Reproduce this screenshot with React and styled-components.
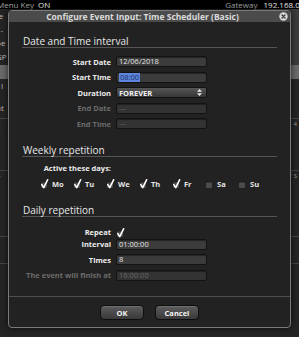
import styled, { createGlobalStyle } from "styled-components";

const GlobalStyle = createGlobalStyle`
  html, body {
    margin: 0;
    padding: 0;
    background: #242424;
  }
  body {
    font-family: "Open Sans", "Liberation Sans", sans-serif;
  }
`;

const Screen = styled.div`
  position: relative;
  width: 299px;
  height: 337px;
  overflow: hidden;
  background: #242424;
`;

const TopBar = styled.div`
  height: 9px;
  background: #000;
  display: flex;
  align-items: center;
  font-size: 8px;
  line-height: 9px;
  white-space: nowrap;
`;

const BarLabel = styled.span`
  color: ${(p) => (p.value ? "#f2f2f2" : "#a8a8a8")};
  margin-left: ${(p) => p.offset || 0}px;
`;

const BgRow = styled.div`
  display: flex;
  height: ${(p) => p.h}px;
  border-bottom: ${(p) => (p.line ? "1px solid #444" : "none")};
  box-sizing: border-box;
  background: ${(p) => (p.selected ? "#6a6a6a" : "transparent")};
`;

const BgLeft = styled.div`
  flex: 1;
  padding-left: 0;
  margin-left: -4px;
  font-size: 8px;
  color: #bcbcbc;
  line-height: 13px;
`;

const BgRight = styled.div`
  width: 40px;
  background: ${(p) => (p.gray ? "#3c3c3c" : "transparent")};
  font-size: 6px;
  color: #999;
  text-align: right;
  padding-right: 2px;
  line-height: 11px;
`;

const Dialog = styled.div`
  position: absolute;
  left: 8px;
  top: 10px;
  width: 283px;
  height: 318px;
  box-sizing: border-box;
  border: 1px solid #7a7a7a;
  border-radius: 4px;
  background: #222;
  overflow: hidden;
  display: flex;
  flex-direction: column;
  box-shadow: 0 0 6px rgba(0, 0, 0, 0.7);
`;

const TitleBar = styled.div`
  position: relative;
  height: 11px;
  background: #4b4b4b;
  display: flex;
  align-items: center;
  justify-content: center;
  padding-right: 14px;
  font-size: 8.5px;
  font-weight: 700;
  color: #dcdcdc;
  white-space: nowrap;
`;

const CloseButton = styled.div`
  position: absolute;
  right: 2px;
  top: 1px;
  width: 9px;
  height: 9px;
`;

const Body = styled.div`
  padding: 13px 13px 13px 13px;
`;

const SectionTitle = styled.div`
  height: 12px;
  line-height: 12px;
  font-size: 10px;
  color: #e8e8e8;
  padding-left: 1px;
  border-bottom: 1px solid #555;
  margin-top: ${(p) => p.top || 0}px;
`;

const Rows = styled.div`
  margin-top: ${(p) => p.top}px;
  display: flex;
  flex-direction: column;
`;

const FormRow = styled.div`
  height: 15.5px;
  display: grid;
  grid-template-columns: 89px 91px;
  column-gap: 5px;
  align-items: center;
`;

const Label = styled.div`
  text-align: right;
  font-size: 7.5px;
  font-weight: 700;
  color: ${(p) => (p.disabled ? "#6c6c6c" : "#ececec")};
  white-space: nowrap;
`;

const Field = styled.div`
  height: 11px;
  box-sizing: border-box;
  border: 1px solid #131313;
  border-radius: 2px;
  background: ${(p) => (p.disabled ? "#333" : "#3c3c3c")};
  box-shadow: inset 0 1px 1px rgba(0, 0, 0, 0.4);
  padding-left: 2px;
  font-size: 7.5px;
  line-height: 9px;
  color: ${(p) => (p.disabled ? "#6a6a6a" : "#e6e6e6")};
  display: flex;
  align-items: center;
`;

const Selected = styled.span`
  background: #5d86dc;
  color: #1c2d62;
  padding: 0 1px;
`;

const Select = styled.div`
  height: 11px;
  box-sizing: border-box;
  border: 1px solid #131313;
  border-radius: 2px;
  background: linear-gradient(#555, #363636);
  padding: 0 4px 0 2px;
  font-size: 7.5px;
  font-weight: 700;
  color: #f0f0f0;
  display: flex;
  align-items: center;
  justify-content: space-between;
`;

const DaysRow = styled.div`
  height: 15.5px;
  padding-left: 18px;
  display: grid;
  grid-template-columns: repeat(7, 33px);
  align-items: center;
`;

const Day = styled.div`
  display: flex;
  align-items: center;
  gap: 3px;
  font-size: 7.5px;
  font-weight: 700;
  color: #e6e6e6;
`;

const Footer = styled.div`
  flex: 1;
  border-top: 1px solid #4e4e4e;
  display: flex;
  justify-content: center;
  gap: 11px;
  padding-top: 8px;
`;

const Button = styled.button`
  width: 44px;
  height: 15px;
  padding: 0;
  border: 1px solid #0e0e0e;
  border-radius: 4px;
  background: linear-gradient(#5c5c5c, #393939);
  box-shadow: inset 0 1px 0 rgba(255, 255, 255, 0.12);
  font-family: inherit;
  font-size: 7.5px;
  font-weight: 700;
  color: #f4f4f4;
`;

const CheckBox = ({ checked }) => (
  <svg width="9" height="10" viewBox="0 0 9 10">
    <rect x="0.5" y="3" width="7" height="6.5" rx="1.5" fill="#4c4c4c" stroke="#1a1a1a" strokeWidth="0.8" />
    {checked && (
      <path d="M1.8 5.6 L3.7 8.6 L7.6 0.8" fill="none" stroke="#fff" strokeWidth="1.6" strokeLinecap="round" strokeLinejoin="round" />
    )}
  </svg>
);

const SortArrows = () => (
  <svg width="5" height="7" viewBox="0 0 5 7">
    <path d="M2.5 0 L5 2.8 H0 Z M2.5 7 L5 4.2 H0 Z" fill="#e8e8e8" />
  </svg>
);

const bgRows = [
  { h: 13.5, left: "te", gray: true },
  { h: 13.5, left: "1-", gray: true },
  { h: 13.5, left: "pe", gray: true },
  { h: 15.5, left: "GP", gray: true },
  { h: 14, left: "", selected: true },
  { h: 22, left: "t I" },
  { h: 18, left: "nt", line: true },
  { h: 52, left: "E", right: "4", line: true },
  { h: 66, left: "T", right: "T S", line: true },
  { h: 27, left: "", line: true },
];

const days = [
  ["Mo", true],
  ["Tu", true],
  ["We", true],
  ["Th", true],
  ["Fr", true],
  ["Sa", false],
  ["Su", false],
];

export default function App() {
  return (
    <Screen>
      <GlobalStyle />
      <TopBar>
        <BarLabel offset={-3}>Menu Key</BarLabel>
        <BarLabel value offset={4}>ON</BarLabel>
        <BarLabel offset={175}>Gateway</BarLabel>
        <BarLabel value offset={6}>192.168.0.1</BarLabel>
      </TopBar>
      {bgRows.map((r, i) => (
        <BgRow key={i} h={r.h} line={r.line} selected={r.selected}>
          <BgLeft>{r.left}</BgLeft>
          <BgRight gray={r.gray}>{r.right}</BgRight>
        </BgRow>
      ))}

      <Dialog>
        <TitleBar>
          Configure Event Input: Time Scheduler (Basic)
          <CloseButton>
            <svg width="9" height="9" viewBox="0 0 9 9">
              <circle cx="4.5" cy="4.5" r="4.2" fill="#d8d8d8" />
              <path d="M3 3 L6 6 M6 3 L3 6" stroke="#3a3a3a" strokeWidth="1.3" strokeLinecap="round" />
            </svg>
          </CloseButton>
        </TitleBar>

        <Body>
          <SectionTitle>Date and Time interval</SectionTitle>
          <Rows top={6}>
            <FormRow>
              <Label>Start Date</Label>
              <Field>12/06/2018</Field>
            </FormRow>
            <FormRow>
              <Label>Start Time</Label>
              <Field>
                <Selected>08:00</Selected>
              </Field>
            </FormRow>
            <FormRow>
              <Label>Duration</Label>
              <Select>
                FOREVER
                <SortArrows />
              </Select>
            </FormRow>
            <FormRow>
              <Label disabled>End Date</Label>
              <Field disabled>---</Field>
            </FormRow>
            <FormRow>
              <Label disabled>End Time</Label>
              <Field disabled>---</Field>
            </FormRow>
          </Rows>

          <SectionTitle top={12}>Weekly repetition</SectionTitle>
          <Rows top={4}>
            <FormRow>
              <Label>Active these days:</Label>
            </FormRow>
            <DaysRow>
              {days.map(([d, on]) => (
                <Day key={d}>
                  <CheckBox checked={on} />
                  {d}
                </Day>
              ))}
            </DaysRow>
          </Rows>

          <SectionTitle top={12}>Daily repetition</SectionTitle>
          <Rows top={4.5}>
            <FormRow>
              <Label>Repeat</Label>
              <div>
                <CheckBox checked />
              </div>
            </FormRow>
            <FormRow>
              <Label>Interval</Label>
              <Field>01:00:00</Field>
            </FormRow>
            <FormRow>
              <Label>Times</Label>
              <Field>8</Field>
            </FormRow>
            <FormRow>
              <Label disabled>The event will finish at</Label>
              <Field disabled>16:00:00</Field>
            </FormRow>
          </Rows>
        </Body>

        <Footer>
          <Button>OK</Button>
          <Button>Cancel</Button>
        </Footer>
      </Dialog>
    </Screen>
  );
}
